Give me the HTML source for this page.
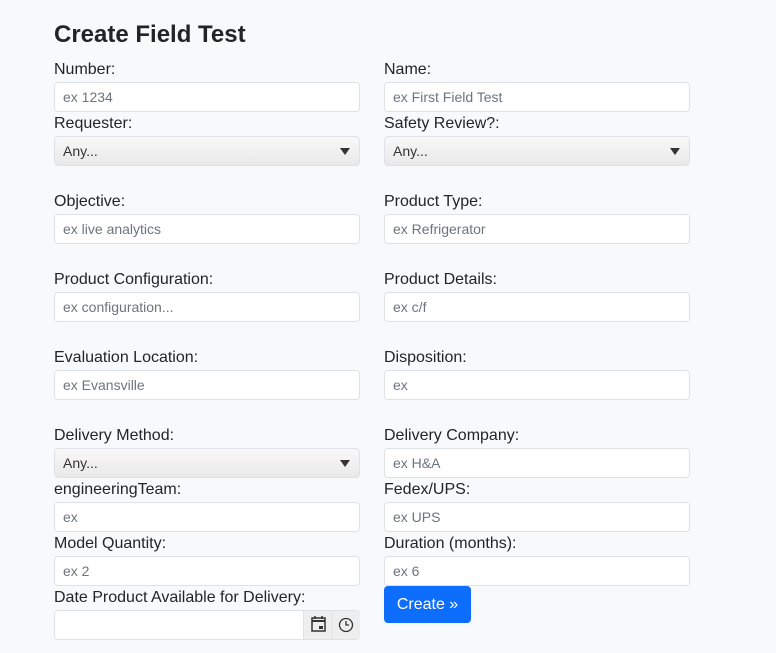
<!DOCTYPE html><html><head><style>
body{margin:0;background:#f8f9fa;width:776px;height:653px;position:relative;font-family:"Liberation Sans",Arial,sans-serif;color:#212529;overflow:hidden}
.a{position:absolute}
h1{position:absolute;left:54px;top:20px;margin:0;font-size:24px;font-weight:bold;line-height:29px}
.l{position:absolute;font-size:16px;line-height:19px}
.i{position:absolute;width:304px;height:28px;background:#fff;border:1px solid #dee2e6;border-radius:4px;font-size:14px;color:#6c757d;line-height:28px;padding-left:8px;box-sizing:content-box;width:296px}
.s{background:linear-gradient(#f8f8f8,#e9e9e9);color:#333}
.s:after{content:"";position:absolute;right:9px;top:11px;border-left:5px solid transparent;border-right:5px solid transparent;border-top:7px solid #333}
</style></head><body>
<h1>Create Field Test</h1>
<div class="l" style="left:54px;top:60px">Number:</div><div class="l" style="left:384px;top:60px">Name:</div>
<div class="i" style="left:54px;top:82px">ex 1234</div><div class="i" style="left:384px;top:82px">ex First Field Test</div>
<div class="l" style="left:54px;top:114px">Requester:</div><div class="l" style="left:384px;top:114px">Safety Review?:</div>
<div class="i s" style="left:54px;top:136px">Any...</div><div class="i s" style="left:384px;top:136px">Any...</div>
<div class="l" style="left:54px;top:192px">Objective:</div><div class="l" style="left:384px;top:192px">Product Type:</div>
<div class="i" style="left:54px;top:214px">ex live analytics</div><div class="i" style="left:384px;top:214px">ex Refrigerator</div>
<div class="l" style="left:54px;top:270px">Product Configuration:</div><div class="l" style="left:384px;top:270px">Product Details:</div>
<div class="i" style="left:54px;top:292px">ex configuration...</div><div class="i" style="left:384px;top:292px">ex c/f</div>
<div class="l" style="left:54px;top:348px">Evaluation Location:</div><div class="l" style="left:384px;top:348px">Disposition:</div>
<div class="i" style="left:54px;top:370px">ex Evansville</div><div class="i" style="left:384px;top:370px">ex</div>
<div class="l" style="left:54px;top:426px">Delivery Method:</div><div class="l" style="left:384px;top:426px">Delivery Company:</div>
<div class="i s" style="left:54px;top:448px">Any...</div><div class="i" style="left:384px;top:448px">ex H&amp;A</div>
<div class="l" style="left:54px;top:480px">engineeringTeam:</div><div class="l" style="left:384px;top:480px">Fedex/UPS:</div>
<div class="i" style="left:54px;top:502px">ex</div><div class="i" style="left:384px;top:502px">ex UPS</div>
<div class="l" style="left:54px;top:534px">Model Quantity:</div><div class="l" style="left:384px;top:534px">Duration (months):</div>
<div class="i" style="left:54px;top:556px">ex 2</div><div class="i" style="left:384px;top:556px">ex 6</div>
<div class="l" style="left:54px;top:588px">Date Product Available for Delivery:</div>
<div class="i" style="left:54px;top:610px;padding:0;width:304px"></div>
<div class="a" style="left:303px;top:611px;width:56px;height:28px;background:#eee;border-left:1px solid #dee2e6;border-radius:0 4px 4px 0">
<svg width="56" height="28"><rect x="8" y="7" width="13" height="13" fill="none" stroke="#333" stroke-width="1.5"/><line x1="8" y1="10" x2="21" y2="10" stroke="#333" stroke-width="2"/><line x1="11" y1="5" x2="11" y2="8" stroke="#333" stroke-width="1.5"/><line x1="18" y1="5" x2="18" y2="8" stroke="#333" stroke-width="1.5"/><rect x="15" y="15" width="4" height="3" fill="#333"/><line x1="28" y1="0" x2="28" y2="28" stroke="#dee2e6"/><circle cx="42" cy="14" r="6.5" fill="none" stroke="#333" stroke-width="1.3"/><path d="M42 10v4h3" fill="none" stroke="#333" stroke-width="1.3"/></svg></div>
<div class="a" style="left:384px;top:586px;width:87px;height:37px;background:#0d6efd;border-radius:4px;color:#fff;font-size:16px;line-height:37px;text-align:center">Create »</div>
</body></html>
